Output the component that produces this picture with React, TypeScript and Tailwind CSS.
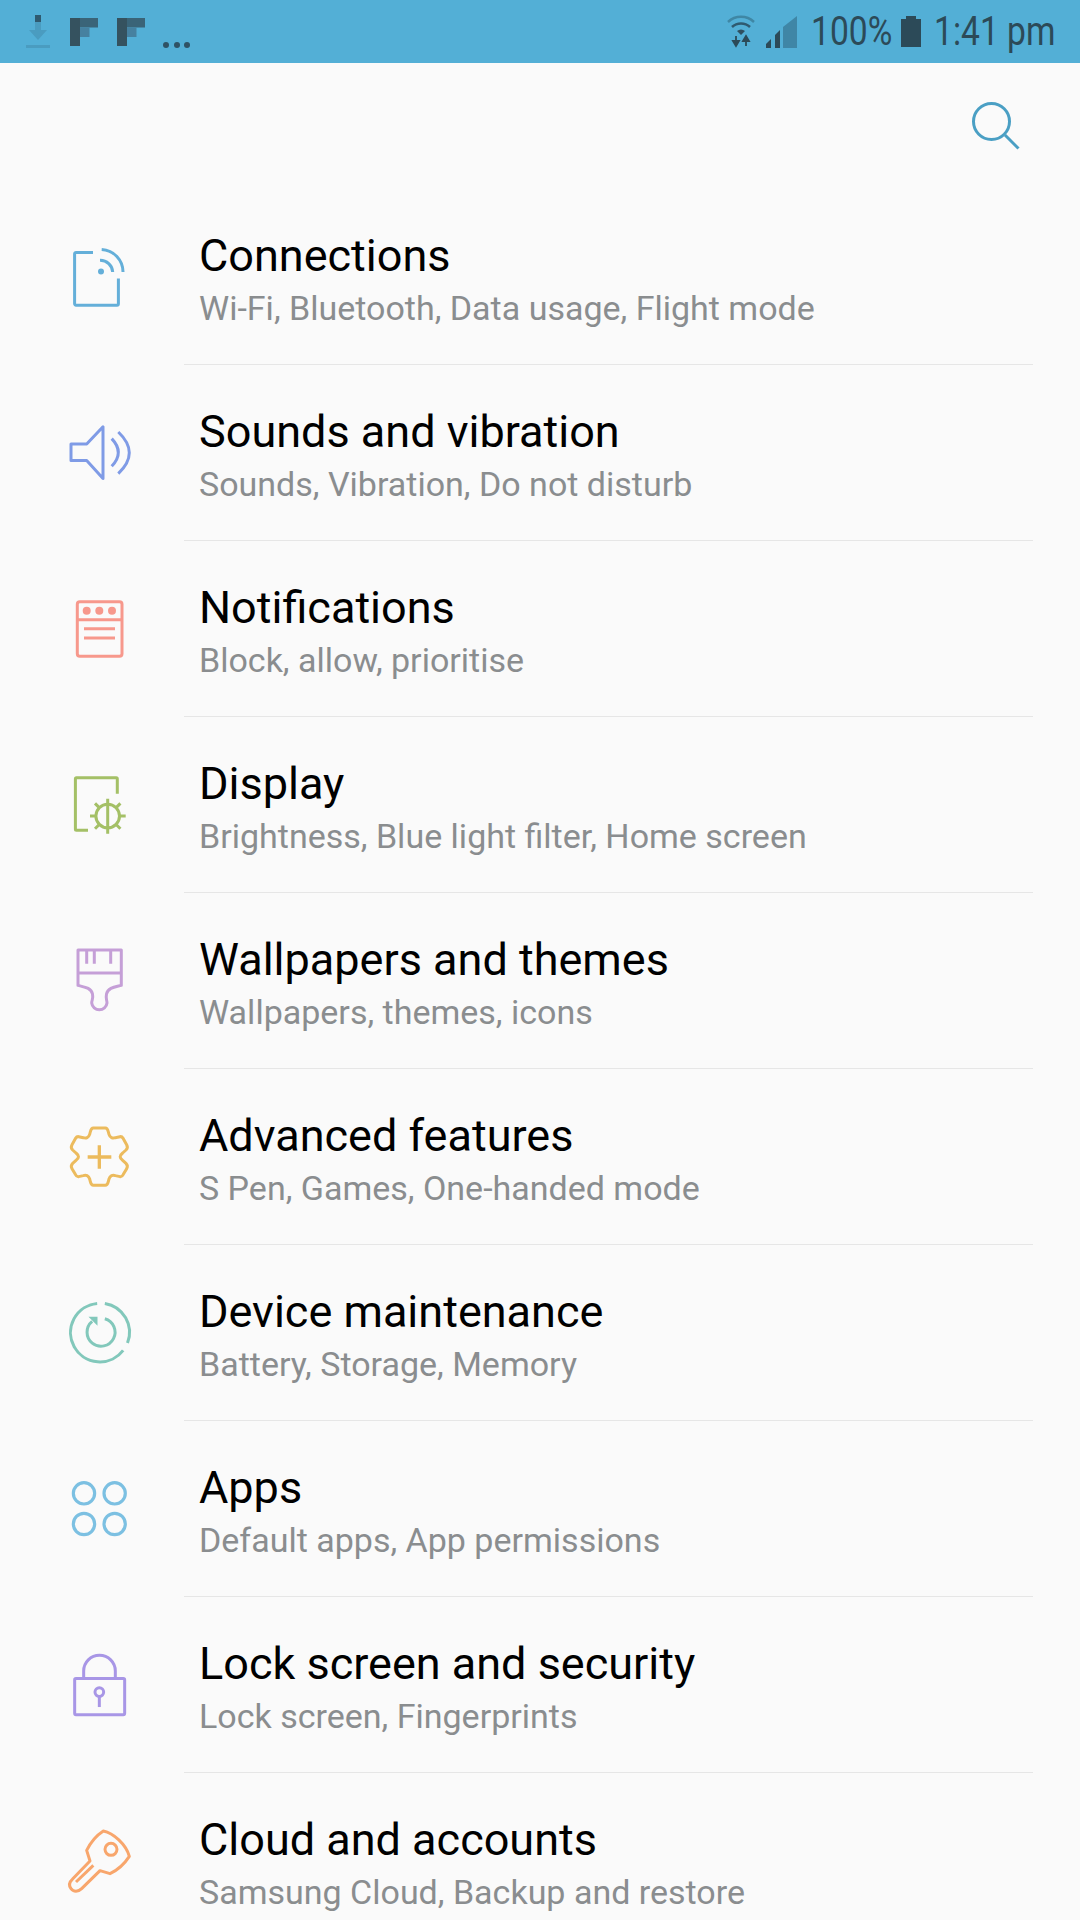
import React from 'react';

// Icons are drawn on a 72px box, centred on x=100 and on the row's middle
const Icon: React.FC<{ color: string; children: React.ReactNode }> = ({ color, children }) => (
  <svg width="72" height="72" viewBox="0 0 72 72" fill="none" stroke={color} strokeWidth="3" strokeLinejoin="round">
    {children}
  </svg>
);

const IconConnections = () => (
  <Icon color="#64afd9">
    <path d="M29 11.4H12a1.4 1.4 0 0 0-1.4 1.4v50a1.4 1.4 0 0 0 1.4 1.4h41a1.4 1.4 0 0 0 1.4-1.4V37.4" />
    <path d="M37.7 8.4A22.5 22.5 0 0 1 59 31" />
    <path d="M36 19.2A12.5 12.5 0 0 1 48.7 31" />
    <circle cx="37" cy="30.4" r="3" fill="#64afd9" stroke="none" />
  </Icon>
);

const IconSound = () => (
  <Icon color="#7f9be6">
    <path d="M7 27H22.7L39 9.8V61.5L22.7 43.6H7z" />
    <path d="M47.7 21.6Q60.9 35.4 47.7 49.3" />
    <path d="M54.3 15Q76.3 35.8 54.3 56.6" />
  </Icon>
);

const IconNotifications = () => (
  <Icon color="#f7988c">
    <g transform="translate(0 0.5)">
      <rect x="13.3" y="8.3" width="44.7" height="54.5" rx="2.5" />
      <path d="M13.3 26.2H58M20 35.2H51M20 44.6H51" />
      <circle cx="22.7" cy="17.2" r="4" fill="#f7988c" stroke="none" />
      <circle cx="35.3" cy="17.2" r="4" fill="#f7988c" stroke="none" />
      <circle cx="48" cy="17.2" r="4" fill="#f7988c" stroke="none" />
    </g>
  </Icon>
);

const IconDisplay = () => (
  <Icon color="#a4c066">
    <g transform="translate(0 0.75)">
      <path d="M24 60.5H12.4a1 1 0 0 1-1-1V9a1 1 0 0 1 1-1h39.9a1 1 0 0 1 1 1V23.9" />
      <circle cx="43.7" cy="46.3" r="11.8" />
      <path d="M43.7 29V64M26 46.3H32M55.5 46.3H61.7M31 33.6L35 37.6M56.4 33.6L52.4 37.6M31 59L35 55M56.4 59L52.4 55" />
    </g>
  </Icon>
);

const IconBrush = () => (
  <Icon color="#c59fd7">
    <g transform="translate(0 1)">
      <path d="M14 4.1H57.3V39.4C51 41 44 41.5 42.5 48 41.5 53 43 54 43 57A7.7 7.7 0 0 1 27.7 57C27.7 54 29.5 53 28.5 48 27 41.5 20 41 14 39.4Z" />
      <path d="M14 27H57.3M22.7 4.1V17.7M30.3 4.1V17.7M46.7 4.1V17.7" />
    </g>
  </Icon>
);

const IconGear = () => (
  <Icon color="#ecbb5d">
    <g transform="translate(-24 -200.65) scale(0.3333)" strokeWidth="9">
      <path d="M160 623H196C204 623 204 632 207 642C210 652 218 655 226 652L240 649C246 648 248 652 250 655L260 673C264 680 263 684 258 689L248 698C238 706 238 712 248 720L258 729C263 734 264 738 260 745L250 762C248 766 246 770 240 769L226 766C218 763 210 766 207 776C204 786 204 795 196 795H160C152 795 152 786 149 776C146 766 138 763 130 766L116 769C110 770 108 766 106 762L96 745C92 738 93 734 98 729L108 720C118 712 118 706 108 698L98 689C93 684 92 680 96 673L106 655C108 652 110 648 116 649L130 652C138 655 146 652 149 642C152 632 152 623 160 623Z" />
      <path d="M143 710H214M178 675V745" strokeWidth="10" />
    </g>
  </Icon>
);

const IconMaintenance = () => (
  <Icon color="#82c8bb">
    <g transform="translate(-22.5 -26.6) scale(0.3333)" strokeWidth="9">
      <path d="M190 99A88 88 0 0 1 258 218" />
      <path d="M245 240A88 88 0 1 1 167 99" />
      <path d="M190 145A42 42 0 1 1 152 153" />
      <path d="M141 139H168V166Z" fill="#82c8bb" stroke="none" />
    </g>
  </Icon>
);

const IconApps = () => (
  <Icon color="#7cc0e2">
    <g transform="translate(-24 -12.65) scale(0.3333)" strokeWidth="9.5">
      <circle cx="132" cy="99" r="32" />
      <circle cx="224" cy="99" r="32" />
      <circle cx="132" cy="191" r="32" />
      <circle cx="224" cy="191" r="32" />
    </g>
  </Icon>
);

const IconLock = () => (
  <Icon color="#a896e6">
    <g transform="translate(-24 -188.6) scale(0.3333)" strokeWidth="9">
      <rect x="104" y="654" width="150" height="109" rx="4" />
      <path d="M131 654V632A47.5 47.5 0 0 1 226 632V654" />
      <circle cx="178" cy="695" r="13" />
      <path d="M178 708V740" />
    </g>
  </Icon>
);

const IconKey = () => (
  <Icon color="#f8a66c">
    <g transform="translate(-24 -184.65) scale(0.3333)" strokeWidth="9">
      <path d="M190 572C220 578 258 612 268 648C255 668 235 688 210 700L180 691L125 745C115 755 100 755 93 745C86 735 88 725 97 717L150 662L140 630C150 610 170 585 190 572Z" />
      <circle cx="213" cy="627" r="18" />
      <path d="M108 725L160 675" />
    </g>
  </Icon>
);

const rows = [
  { title: 'Connections', sub: 'Wi-Fi, Bluetooth, Data usage, Flight mode', icon: <IconConnections /> },
  { title: 'Sounds and vibration', sub: 'Sounds, Vibration, Do not disturb', icon: <IconSound /> },
  { title: 'Notifications', sub: 'Block, allow, prioritise', icon: <IconNotifications /> },
  { title: 'Display', sub: 'Brightness, Blue light filter, Home screen', icon: <IconDisplay /> },
  { title: 'Wallpapers and themes', sub: 'Wallpapers, themes, icons', icon: <IconBrush /> },
  { title: 'Advanced features', sub: 'S Pen, Games, One-handed mode', icon: <IconGear /> },
  { title: 'Device maintenance', sub: 'Battery, Storage, Memory', icon: <IconMaintenance /> },
  { title: 'Apps', sub: 'Default apps, App permissions', icon: <IconApps /> },
  { title: 'Lock screen and security', sub: 'Lock screen, Fingerprints', icon: <IconLock /> },
  { title: 'Cloud and accounts', sub: 'Samsung Cloud, Backup and restore', icon: <IconKey /> },
];

const PixelF = () => (
  <svg width="28" height="28" viewBox="0 0 28 28">
    <rect x="0" y="0" width="10" height="28" fill="#35525f" />
    <rect x="10" y="0" width="18" height="9.5" fill="#3a6478" />
    <rect x="10" y="9.5" width="9.5" height="9.5" fill="#4681a0" />
  </svg>
);

const StatusBar = () => (
  <div className="h-[63px] bg-[#53afd6] flex items-center justify-between pl-[26px] pr-[26px] text-[#2c4a58]">
    <div className="flex items-center">
      <svg width="24" height="33" viewBox="0 0 24 33">
        <rect x="9" y="0" width="6" height="7" fill="#2f5a70" />
        <rect x="9" y="7" width="6" height="9" fill="#4a9cc0" />
        <path d="M3 15h18l-9 10z" fill="#4a9cc0" />
        <rect x="0" y="30" width="24" height="3" fill="#4a9cc0" />
      </svg>
      <div className="ml-[20px]"><PixelF /></div>
      <div className="ml-[19px]"><PixelF /></div>
      <div className="flex gap-[4.5px] ml-[18px] mt-[26px]">
        <span className="w-[6px] h-[6px] rounded-full bg-[#2f5264]" />
        <span className="w-[6px] h-[6px] rounded-full bg-[#2f5264]" />
        <span className="w-[6px] h-[6px] rounded-full bg-[#2f5264]" />
      </div>
    </div>
    <div className="flex items-center">
      <svg width="28" height="33" viewBox="0 0 28 33">
        <path d="M1 7a19 19 0 0 1 26 0" fill="none" stroke="#3f87a5" strokeWidth="2.5" />
        <path d="M5 12a13 13 0 0 1 18 0" fill="none" stroke="#2f5a70" strokeWidth="2.5" />
        <path d="M10 16a6 6 0 0 1 8 0l-4 4z" fill="#2f4f5f" />
        <path d="M9 21v8M6 26l3 5 3-5zM19 31v-8M16 26l3-5 3 5z" fill="#2c4a58" stroke="#2c4a58" strokeWidth="1.8" />
      </svg>
      <svg width="32" height="32" viewBox="0 0 32 32" className="ml-[11px]">
        <path d="M0 32v-4l5-5v9z" fill="#2c4a58" />
        <path d="M9 32V19l5-5v18z" fill="#2c4a58" />
        <path d="M17 32V11L31 0v32z" fill="#3f86a6" />
      </svg>
      <span className="ml-[13px] w-[81px] text-[40px] leading-none whitespace-nowrap scale-x-[0.84] origin-left">100%</span>
      <svg width="20" height="31" viewBox="0 0 20 31" className="ml-[9px]">
        <path d="M0 3h5V0h10v3h5v28H0z" fill="#2c4a58" />
      </svg>
      <span className="ml-[13px] w-[120px] text-[40px] leading-none whitespace-nowrap scale-x-[0.84] origin-left">1:41 pm</span>
    </div>
  </div>
);

const App: React.FC = () => {
  return (
    <div className="w-[1080px] h-[1920px] overflow-hidden bg-[#fafafa] [font-family:Roboto,sans-serif]">
      <StatusBar />
      <div className="h-[125.5px] flex items-start justify-end pr-[60px] pt-[39px]">
        <svg width="48" height="48" viewBox="0 0 48 48" fill="none" stroke="#4a9fc4" strokeWidth="3">
          <circle cx="19.5" cy="19.5" r="18" />
          <path d="M33 33l13.5 13.5" />
        </svg>
      </div>
      {rows.map((r, i) => (
        <div key={i} className="h-[176px] flex">
          <div className="w-[184px] shrink-0 flex items-center pl-[64px]">
            <div className="w-[72px] h-[72px] shrink-0">{r.icon}</div>
          </div>
          <div className="w-[849px] pl-[15px] pt-[9px] flex flex-col justify-center border-b border-[#e6e6e6]">
            <div className="text-[45px] leading-[54px] text-black whitespace-nowrap">{r.title}</div>
            <div className="text-[34px] leading-[50px] text-[#8a8d8f] whitespace-nowrap">{r.sub}</div>
          </div>
        </div>
      ))}
    </div>
  );
};

export default App;
